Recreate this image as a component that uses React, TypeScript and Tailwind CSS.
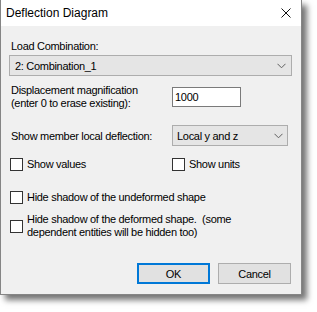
import React from "react";

const Chevron = () => (
  <svg width="9" height="6" viewBox="0 0 9 6" className="shrink-0">
    <polyline points="0.5,0.8 4.5,4.8 8.5,0.8" fill="none" stroke="#606060" strokeWidth="1" />
  </svg>
);

const Checkbox = () => (
  <div className="w-[13px] h-[13px] border border-[#333333] bg-white shrink-0" />
);

export default function App() {
  return (
    <div className="w-[317px] h-[312px] bg-white font-['Liberation_Sans',Arial,sans-serif] text-[11px] tracking-[-0.3px] text-black">
      <div className="w-[302px] h-[295px] flex flex-col border-l border-r border-b border-[#858585] bg-[#f0f0f0] shadow-[5px_5px_6px_rgba(0,0,0,0.55)]">
        {/* Title bar */}
        <div className="h-[26px] bg-white flex items-center justify-between pl-[5px] pr-[10px] shrink-0">
          <span className="leading-[14px] text-[12px] tracking-normal">Deflection Diagram</span>
          <svg width="10" height="10" viewBox="0 0 10 10">
            <path d="M0.5 0.5 L9.5 9.5 M9.5 0.5 L0.5 9.5" stroke="#111" strokeWidth="1" />
          </svg>
        </div>

        {/* Body */}
        <div className="flex flex-col pl-[8px] pr-[9px]">
          <div className="mt-[13px] ml-[2px] leading-[14px]">Load Combination:</div>
          <div className="mt-[2px] h-[21px] w-[283px] border border-[#adadad] bg-[#e5e5e5] flex items-center justify-between pl-[5px] pr-[5px]">
            <span className="leading-[14px]">2: Combination_1</span>
            <Chevron />
          </div>

          <div className="mt-[8px] flex items-center">
            <div className="w-[163px] pl-[2px] leading-[13px]">
              <div>Displacement magnification</div>
              <div>(enter 0 to erase existing):</div>
            </div>
            <div className="w-[69px] h-[20px] border border-[#7a7a7a] bg-white flex items-center pl-[2px] leading-[14px]">
              1000
            </div>
          </div>

          <div className="mt-[15px] flex items-center">
            <div className="w-[163px] pl-[2px] leading-[14px] whitespace-nowrap">Show member local deflection:</div>
            <div className="w-[116px] h-[21px] border border-[#adadad] bg-[#e5e5e5] flex items-center justify-between pl-[4px] pr-[4px]">
              <span className="leading-[14px]">Local y and z</span>
              <Chevron />
            </div>
          </div>

          <div className="mt-[11px] flex items-center h-[14px]">
            <div className="w-[163px] pl-[1px] flex items-center gap-[4px]">
              <Checkbox />
              <span className="leading-[14px]">Show values</span>
            </div>
            <div className="flex items-center gap-[4px]">
              <Checkbox />
              <span className="leading-[14px]">Show units</span>
            </div>
          </div>

          <div className="mt-[19px] pl-[1px] flex items-center gap-[4px] h-[14px]">
            <Checkbox />
            <span className="leading-[14px]">Hide shadow of the undeformed shape</span>
          </div>

          <div className="mt-[9px] pl-[1px] flex items-center gap-[4px]">
            <Checkbox />
            <div className="leading-[13px]">
              <div className="whitespace-pre">Hide shadow of the deformed shape.  (some</div>
              <div>dependent entities will be hidden too)</div>
            </div>
          </div>

          <div className="mt-[24px] flex justify-end gap-[8px] pr-[1px]">
            <div className="w-[73px] h-[21px] border-2 border-[#0078d7] bg-[#e1e1e1] flex items-center justify-center leading-[14px]">
              OK
            </div>
            <div className="w-[73px] h-[21px] border border-[#adadad] bg-[#e1e1e1] flex items-center justify-center leading-[14px]">
              Cancel
            </div>
          </div>
        </div>
      </div>
    </div>
  );
}
